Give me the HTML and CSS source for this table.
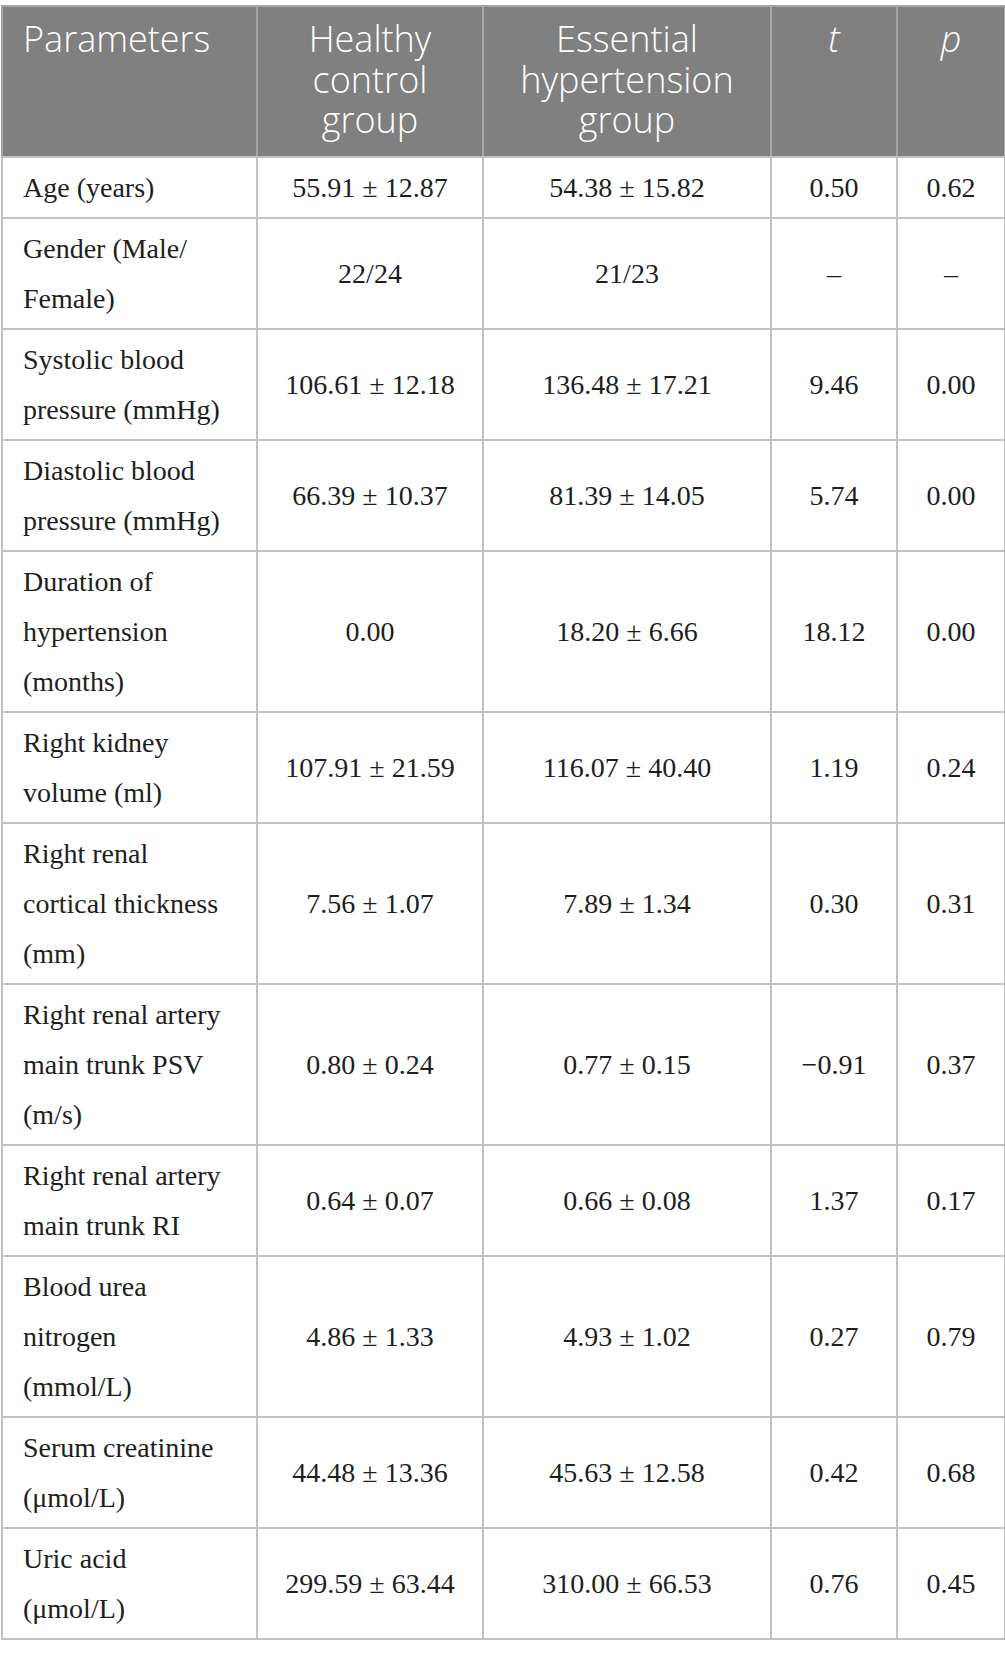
FILE: index.html
```html
<!DOCTYPE html>
<html lang="en">
<head>
  <meta charset="UTF-8" />
  <title>Clinical parameters</title>
  <link rel="stylesheet" href="styles.css">
</head>
<body>
  <table class="data-table">
    <colgroup>
      <col class="col-param">
      <col class="col-healthy">
      <col class="col-eh">
      <col class="col-t">
      <col class="col-p">
    </colgroup>
    <thead>
      <tr>
        <th class="left">Parameters</th>
        <th>Healthy control group</th>
        <th>Essential hypertension group</th>
        <th><i>t</i></th>
        <th><i>p</i></th>
      </tr>
    </thead>
    <tbody>
      <tr>
        <td class="left">Age (years)</td>
        <td>55.91 ± 12.87</td>
        <td>54.38 ± 15.82</td>
        <td>0.50</td>
        <td>0.62</td>
      </tr>
      <tr>
        <td class="left">Gender (Male/<wbr>Female)</td>
        <td>22/24</td>
        <td>21/23</td>
        <td>–</td>
        <td>–</td>
      </tr>
      <tr>
        <td class="left">Systolic blood pressure (mmHg)</td>
        <td>106.61 ± 12.18</td>
        <td>136.48 ± 17.21</td>
        <td>9.46</td>
        <td>0.00</td>
      </tr>
      <tr>
        <td class="left">Diastolic blood pressure (mmHg)</td>
        <td>66.39 ± 10.37</td>
        <td>81.39 ± 14.05</td>
        <td>5.74</td>
        <td>0.00</td>
      </tr>
      <tr>
        <td class="left">Duration of hypertension (months)</td>
        <td>0.00</td>
        <td>18.20 ± 6.66</td>
        <td>18.12</td>
        <td>0.00</td>
      </tr>
      <tr>
        <td class="left">Right kidney volume (ml)</td>
        <td>107.91 ± 21.59</td>
        <td>116.07 ± 40.40</td>
        <td>1.19</td>
        <td>0.24</td>
      </tr>
      <tr>
        <td class="left">Right renal cortical thickness (mm)</td>
        <td>7.56 ± 1.07</td>
        <td>7.89 ± 1.34</td>
        <td>0.30</td>
        <td>0.31</td>
      </tr>
      <tr>
        <td class="left">Right renal artery main trunk PSV (m/s)</td>
        <td>0.80 ± 0.24</td>
        <td>0.77 ± 0.15</td>
        <td>−0.91</td>
        <td>0.37</td>
      </tr>
      <tr>
        <td class="left">Right renal artery main trunk RI</td>
        <td>0.64 ± 0.07</td>
        <td>0.66 ± 0.08</td>
        <td>1.37</td>
        <td>0.17</td>
      </tr>
      <tr>
        <td class="left">Blood urea nitrogen (mmol/L)</td>
        <td>4.86 ± 1.33</td>
        <td>4.93 ± 1.02</td>
        <td>0.27</td>
        <td>0.79</td>
      </tr>
      <tr>
        <td class="left">Serum creatinine (μmol/L)</td>
        <td>44.48 ± 13.36</td>
        <td>45.63 ± 12.58</td>
        <td>0.42</td>
        <td>0.68</td>
      </tr>
      <tr>
        <td class="left">Uric acid (μmol/L)</td>
        <td>299.59 ± 63.44</td>
        <td>310.00 ± 66.53</td>
        <td>0.76</td>
        <td>0.45</td>
      </tr>
    </tbody>
  </table>
</body>
</html>
```

FILE: styles.css
```css
* {
  box-sizing: border-box;
}

body {
  margin: 5px 0 0 1px;
  background: #fff;
}

.data-table {
  width: 1003px;
  border-collapse: collapse;
  table-layout: fixed;
}

.col-param { width: 255px; }
.col-healthy { width: 226px; }
.col-eh { width: 288px; }
.col-t { width: 126px; }
.col-p { width: 108px; }

.data-table th,
.data-table td {
  border: 2px solid #c2c2c2;
  text-align: center;
}

.data-table th {
  background-color: #808080;
  color: #fff;
  font-family: 'Open Sans', sans-serif;
  font-weight: 300;
  font-size: 36px;
  line-height: 40.5px;
  padding: 12px 8px 15px;
  vertical-align: top;
}

.data-table thead th {
  border-color: #a6a6a6 #a6a6a6 #c2c2c2;
}

.data-table td {
  font-family: 'Liberation Serif', 'Times New Roman', serif;
  font-size: 28px;
  line-height: 50px;
  color: #1e1e1e;
  padding: 5px 8px 4px;
  vertical-align: middle;
}

.data-table .left {
  text-align: left;
  padding-left: 20px;
  padding-right: 30px;
}
```
